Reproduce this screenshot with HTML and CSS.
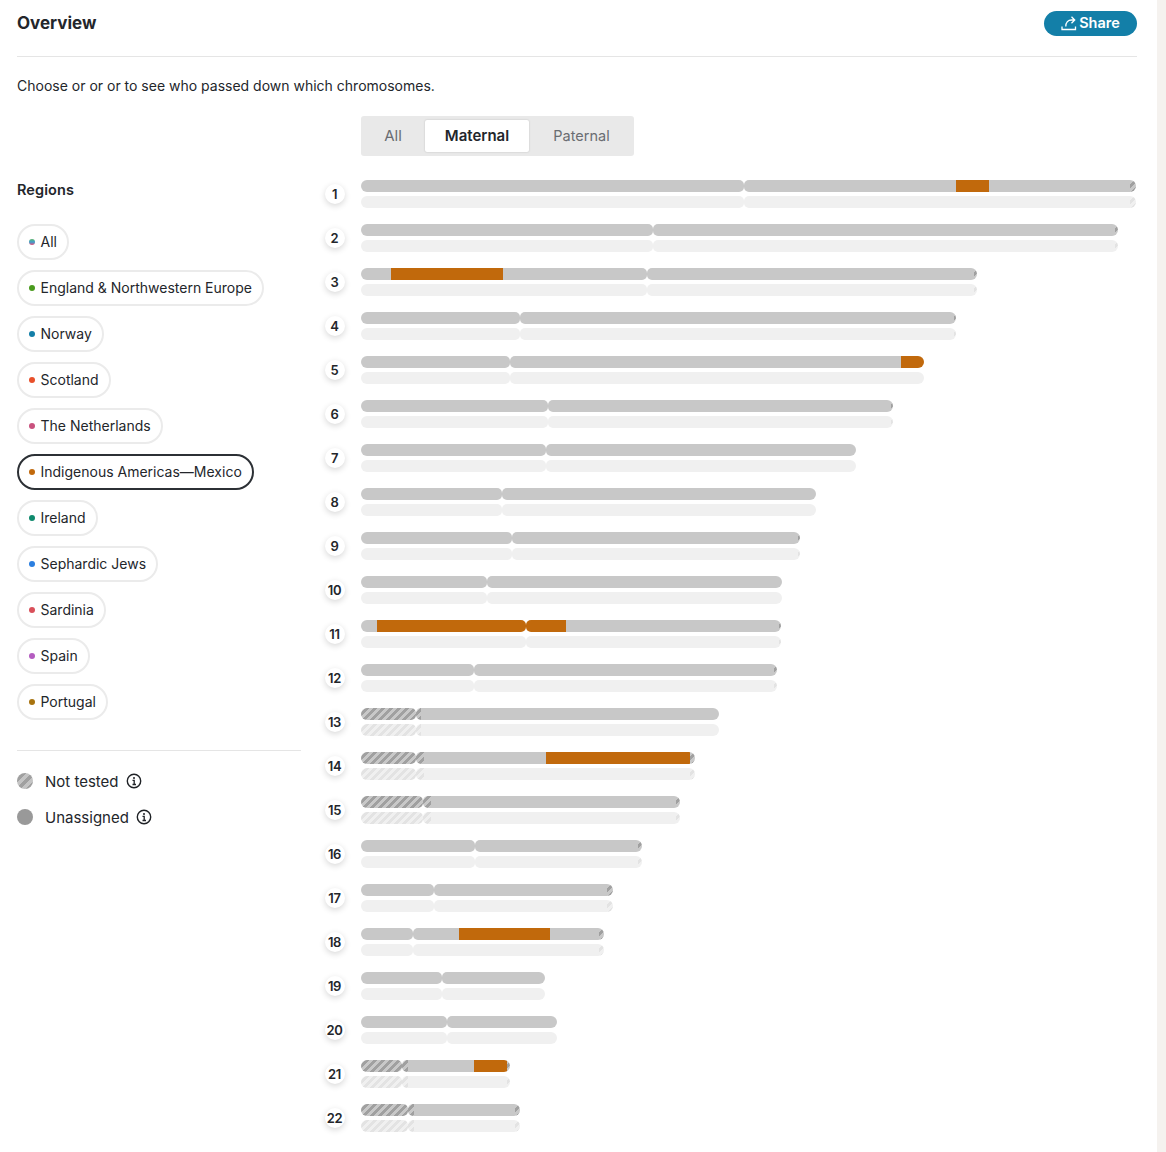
FILE: index.html
```html
<!DOCTYPE html>
<html lang="en">
<head>
<meta charset="utf-8">
<title>Overview</title>
<link rel="stylesheet" href="styles.css">
</head>
<body>
<div class="page">
<main class="panel">
<header class="head">
<h1 class="title">Overview</h1>
<button class="share"><svg class="share-icon" viewBox="0 0 16 16" width="16" height="16"><path d="M1 11.500v3h13.500v-3M4.800 11.500c0-4 2.300-6.500 5.700-6.500h3M10.500 1.800l3.200 3.200-3.200 3.200" fill="none" stroke="#fff" stroke-width="1.300"/></svg>Share</button>
</header>
<p class="intro">Choose or or or to see who passed down which chromosomes.</p>
<div class="tabs-row"><div class="tabs"><span class="tab tab-all">All</span><span class="tab active">Maternal</span><span class="tab tab-pat">Paternal</span></div></div>
<div class="columns">
<aside class="side">
<h2 class="regions">Regions</h2>
<ul class="pills">
<li class="pill"><i class="dot dot-all"></i>All</li>
<li class="pill"><i class="dot d-green"></i>England &amp; Northwestern Europe</li>
<li class="pill"><i class="dot d-teal"></i>Norway</li>
<li class="pill"><i class="dot d-red"></i>Scotland</li>
<li class="pill"><i class="dot d-pink"></i>The Netherlands</li>
<li class="pill selected"><i class="dot d-orange"></i>Indigenous Americas—Mexico</li>
<li class="pill"><i class="dot d-emerald"></i>Ireland</li>
<li class="pill"><i class="dot d-blue"></i>Sephardic Jews</li>
<li class="pill"><i class="dot d-coral"></i>Sardinia</li>
<li class="pill"><i class="dot d-purple"></i>Spain</li>
<li class="pill"><i class="dot d-brown"></i>Portugal</li>
</ul>
<div class="legend">
<div class="legend-row"><i class="swatch swatch-hatch"></i>Not tested<svg class="info" viewBox="0 0 16 16" width="16" height="16"><circle cx="8" cy="8" r="6.700" fill="none" stroke="#1f2226" stroke-width="1.400"/><path d="M6.500 7.300H8.200V11.500M6.500 11.500H10" fill="none" stroke="#1f2226" stroke-width="1.300"/><circle cx="8" cy="4.900" r="1" fill="#1f2226"/></svg></div>
<div class="legend-row"><i class="swatch swatch-solid"></i>Unassigned<svg class="info" viewBox="0 0 16 16" width="16" height="16"><circle cx="8" cy="8" r="6.700" fill="none" stroke="#1f2226" stroke-width="1.400"/><path d="M6.500 7.300H8.200V11.500M6.500 11.500H10" fill="none" stroke="#1f2226" stroke-width="1.300"/><circle cx="8" cy="4.900" r="1" fill="#1f2226"/></svg></div>
</div>
</aside>
<section class="chart">
<div class="row"><span class="num">1</span><div class="tracks">
<div class="track top"><div class="arm p"><span class="seg plain" style="width:383px"></span></div><div class="arm q"><span class="seg plain" style="width:212px"></span><span class="seg orange" style="width:33px"></span><span class="seg plain" style="width:141px"></span><span class="seg hatch" style="width:6px"></span></div></div>
<div class="track bottom"><div class="arm p"><span class="seg plain" style="width:383px"></span></div><div class="arm q"><span class="seg plain" style="width:386px"></span><span class="seg hatch" style="width:6px"></span></div></div>
</div></div>
<div class="row"><span class="num">2</span><div class="tracks">
<div class="track top"><div class="arm p"><span class="seg plain" style="width:292px"></span></div><div class="arm q"><span class="seg plain" style="width:462px"></span><span class="seg hatch" style="width:3px"></span></div></div>
<div class="track bottom"><div class="arm p"><span class="seg plain" style="width:292px"></span></div><div class="arm q"><span class="seg plain" style="width:462px"></span><span class="seg hatch" style="width:3px"></span></div></div>
</div></div>
<div class="row"><span class="num">3</span><div class="tracks">
<div class="track top"><div class="arm p"><span class="seg plain" style="width:30px"></span><span class="seg orange" style="width:112px"></span><span class="seg plain" style="width:144px"></span></div><div class="arm q"><span class="seg plain" style="width:327px"></span><span class="seg hatch" style="width:3px"></span></div></div>
<div class="track bottom"><div class="arm p"><span class="seg plain" style="width:286px"></span></div><div class="arm q"><span class="seg plain" style="width:327px"></span><span class="seg hatch" style="width:3px"></span></div></div>
</div></div>
<div class="row"><span class="num">4</span><div class="tracks">
<div class="track top"><div class="arm p"><span class="seg plain" style="width:159px"></span></div><div class="arm q"><span class="seg plain" style="width:434px"></span><span class="seg hatch" style="width:2px"></span></div></div>
<div class="track bottom"><div class="arm p"><span class="seg plain" style="width:159px"></span></div><div class="arm q"><span class="seg plain" style="width:434px"></span><span class="seg hatch" style="width:2px"></span></div></div>
</div></div>
<div class="row"><span class="num">5</span><div class="tracks">
<div class="track top"><div class="arm p"><span class="seg plain" style="width:149px"></span></div><div class="arm q"><span class="seg plain" style="width:391px"></span><span class="seg orange" style="width:23px"></span></div></div>
<div class="track bottom"><div class="arm p"><span class="seg plain" style="width:149px"></span></div><div class="arm q"><span class="seg plain" style="width:414px"></span></div></div>
</div></div>
<div class="row"><span class="num">6</span><div class="tracks">
<div class="track top"><div class="arm p"><span class="seg plain" style="width:187px"></span></div><div class="arm q"><span class="seg plain" style="width:343px"></span><span class="seg hatch" style="width:2px"></span></div></div>
<div class="track bottom"><div class="arm p"><span class="seg plain" style="width:187px"></span></div><div class="arm q"><span class="seg plain" style="width:343px"></span><span class="seg hatch" style="width:2px"></span></div></div>
</div></div>
<div class="row"><span class="num">7</span><div class="tracks">
<div class="track top"><div class="arm p"><span class="seg plain" style="width:185px"></span></div><div class="arm q"><span class="seg plain" style="width:310px"></span></div></div>
<div class="track bottom"><div class="arm p"><span class="seg plain" style="width:185px"></span></div><div class="arm q"><span class="seg plain" style="width:310px"></span></div></div>
</div></div>
<div class="row"><span class="num">8</span><div class="tracks">
<div class="track top"><div class="arm p"><span class="seg plain" style="width:141px"></span></div><div class="arm q"><span class="seg plain" style="width:314px"></span></div></div>
<div class="track bottom"><div class="arm p"><span class="seg plain" style="width:141px"></span></div><div class="arm q"><span class="seg plain" style="width:314px"></span></div></div>
</div></div>
<div class="row"><span class="num">9</span><div class="tracks">
<div class="track top"><div class="arm p"><span class="seg plain" style="width:151px"></span></div><div class="arm q"><span class="seg plain" style="width:286px"></span><span class="seg hatch" style="width:2px"></span></div></div>
<div class="track bottom"><div class="arm p"><span class="seg plain" style="width:151px"></span></div><div class="arm q"><span class="seg plain" style="width:286px"></span><span class="seg hatch" style="width:2px"></span></div></div>
</div></div>
<div class="row"><span class="num">10</span><div class="tracks">
<div class="track top"><div class="arm p"><span class="seg plain" style="width:126px"></span></div><div class="arm q"><span class="seg plain" style="width:295px"></span></div></div>
<div class="track bottom"><div class="arm p"><span class="seg plain" style="width:126px"></span></div><div class="arm q"><span class="seg plain" style="width:295px"></span></div></div>
</div></div>
<div class="row"><span class="num">11</span><div class="tracks">
<div class="track top"><div class="arm p"><span class="seg plain" style="width:16px"></span><span class="seg orange" style="width:149px"></span></div><div class="arm q"><span class="seg orange" style="width:40px"></span><span class="seg plain" style="width:213px"></span><span class="seg hatch" style="width:2px"></span></div></div>
<div class="track bottom"><div class="arm p"><span class="seg plain" style="width:165px"></span></div><div class="arm q"><span class="seg plain" style="width:253px"></span><span class="seg hatch" style="width:2px"></span></div></div>
</div></div>
<div class="row"><span class="num">12</span><div class="tracks">
<div class="track top"><div class="arm p"><span class="seg plain" style="width:113px"></span></div><div class="arm q"><span class="seg plain" style="width:300px"></span><span class="seg hatch" style="width:3px"></span></div></div>
<div class="track bottom"><div class="arm p"><span class="seg plain" style="width:113px"></span></div><div class="arm q"><span class="seg plain" style="width:300px"></span><span class="seg hatch" style="width:3px"></span></div></div>
</div></div>
<div class="row"><span class="num">13</span><div class="tracks">
<div class="track top"><div class="arm p"><span class="seg hatch" style="width:55px"></span></div><div class="arm q"><span class="seg hatch" style="width:5px"></span><span class="seg plain" style="width:298px"></span></div></div>
<div class="track bottom"><div class="arm p"><span class="seg hatch" style="width:55px"></span></div><div class="arm q"><span class="seg hatch" style="width:5px"></span><span class="seg plain" style="width:298px"></span></div></div>
</div></div>
<div class="row"><span class="num">14</span><div class="tracks">
<div class="track top"><div class="arm p"><span class="seg hatch" style="width:55px"></span></div><div class="arm q"><span class="seg hatch" style="width:8px"></span><span class="seg plain" style="width:122px"></span><span class="seg orange" style="width:144px"></span><span class="seg hatch" style="width:5px"></span></div></div>
<div class="track bottom"><div class="arm p"><span class="seg hatch" style="width:55px"></span></div><div class="arm q"><span class="seg hatch" style="width:8px"></span><span class="seg plain" style="width:266px"></span><span class="seg hatch" style="width:5px"></span></div></div>
</div></div>
<div class="row"><span class="num">15</span><div class="tracks">
<div class="track top"><div class="arm p"><span class="seg hatch" style="width:62px"></span></div><div class="arm q"><span class="seg hatch" style="width:8px"></span><span class="seg plain" style="width:245px"></span><span class="seg hatch" style="width:4px"></span></div></div>
<div class="track bottom"><div class="arm p"><span class="seg hatch" style="width:62px"></span></div><div class="arm q"><span class="seg hatch" style="width:8px"></span><span class="seg plain" style="width:245px"></span><span class="seg hatch" style="width:4px"></span></div></div>
</div></div>
<div class="row"><span class="num">16</span><div class="tracks">
<div class="track top"><div class="arm p"><span class="seg plain" style="width:114px"></span></div><div class="arm q"><span class="seg plain" style="width:163px"></span><span class="seg hatch" style="width:4px"></span></div></div>
<div class="track bottom"><div class="arm p"><span class="seg plain" style="width:114px"></span></div><div class="arm q"><span class="seg plain" style="width:163px"></span><span class="seg hatch" style="width:4px"></span></div></div>
</div></div>
<div class="row"><span class="num">17</span><div class="tracks">
<div class="track top"><div class="arm p"><span class="seg plain" style="width:73px"></span></div><div class="arm q"><span class="seg plain" style="width:173px"></span><span class="seg hatch" style="width:6px"></span></div></div>
<div class="track bottom"><div class="arm p"><span class="seg plain" style="width:73px"></span></div><div class="arm q"><span class="seg plain" style="width:173px"></span><span class="seg hatch" style="width:6px"></span></div></div>
</div></div>
<div class="row"><span class="num">18</span><div class="tracks">
<div class="track top"><div class="arm p"><span class="seg plain" style="width:52px"></span></div><div class="arm q"><span class="seg plain" style="width:46px"></span><span class="seg orange" style="width:91px"></span><span class="seg plain" style="width:49px"></span><span class="seg hatch" style="width:5px"></span></div></div>
<div class="track bottom"><div class="arm p"><span class="seg plain" style="width:52px"></span></div><div class="arm q"><span class="seg plain" style="width:186px"></span><span class="seg hatch" style="width:5px"></span></div></div>
</div></div>
<div class="row"><span class="num">19</span><div class="tracks">
<div class="track top"><div class="arm p"><span class="seg plain" style="width:81px"></span></div><div class="arm q"><span class="seg plain" style="width:103px"></span></div></div>
<div class="track bottom"><div class="arm p"><span class="seg plain" style="width:81px"></span></div><div class="arm q"><span class="seg plain" style="width:103px"></span></div></div>
</div></div>
<div class="row"><span class="num">20</span><div class="tracks">
<div class="track top"><div class="arm p"><span class="seg plain" style="width:86px"></span></div><div class="arm q"><span class="seg plain" style="width:110px"></span></div></div>
<div class="track bottom"><div class="arm p"><span class="seg plain" style="width:86px"></span></div><div class="arm q"><span class="seg plain" style="width:110px"></span></div></div>
</div></div>
<div class="row"><span class="num">21</span><div class="tracks">
<div class="track top"><div class="arm p"><span class="seg hatch" style="width:41px"></span></div><div class="arm q"><span class="seg hatch" style="width:6px"></span><span class="seg plain" style="width:66px"></span><span class="seg orange" style="width:33px"></span><span class="seg hatch" style="width:3px"></span></div></div>
<div class="track bottom"><div class="arm p"><span class="seg hatch" style="width:41px"></span></div><div class="arm q"><span class="seg hatch" style="width:6px"></span><span class="seg plain" style="width:99px"></span><span class="seg hatch" style="width:3px"></span></div></div>
</div></div>
<div class="row"><span class="num">22</span><div class="tracks">
<div class="track top"><div class="arm p"><span class="seg hatch" style="width:47px"></span></div><div class="arm q"><span class="seg hatch" style="width:6px"></span><span class="seg plain" style="width:101px"></span><span class="seg hatch" style="width:5px"></span></div></div>
<div class="track bottom"><div class="arm p"><span class="seg hatch" style="width:47px"></span></div><div class="arm q"><span class="seg hatch" style="width:6px"></span><span class="seg plain" style="width:101px"></span><span class="seg hatch" style="width:5px"></span></div></div>
</div></div>
</section>
</div>
</main>
<div class="strip"></div>
</div>
</body>
</html>
```
FILE: styles.css
```css
* { box-sizing: border-box; }
html, body { margin: 0; padding: 0; }
body { font-family: Inter, "Liberation Sans", sans-serif; color: #23262b; background: #fff; }
.page { display: flex; width: 1166px; height: 1152px; overflow: hidden; }
.panel { width: 1157px; flex: none; padding: 0 20px 0 17px; background: #fff; }
.strip { flex: 1; background: #f5f2ef; }
.head { display: flex; justify-content: space-between; align-items: center; height: 57px; padding-bottom: 10px; border-bottom: 1px solid #e5e5e5; }
.title { margin: 0; font-size: 17px; font-weight: 700; line-height: 24px; }
.share { display: flex; align-items: center; justify-content: center; gap: 2px; width: 93px; height: 25px; padding: 0; border: 0; border-radius: 13px; background: #137fa8; color: #fff; font: 600 14.500px/20px Inter, "Liberation Sans", sans-serif; }
.share-icon { flex: none; }
.intro { margin: 19px 0 0; font-size: 14px; line-height: 20px; }
.tabs-row { margin: 20px 0 0 344px; }
.tabs { display: inline-flex; height: 40px; padding: 4px 0; border-radius: 3px; background: #e9e9e9; }
.tab { display: flex; align-items: center; justify-content: center; padding-bottom: 1px; font-size: 15px; color: #6a6d72; flex: none; }
.tab-all { width: 64px; }
.tab-pat { width: 105px; font-size: 14.500px; }
.tab.active { width: 104px; background: #fff; color: #23262b; font-weight: 600; border-radius: 2px; box-shadow: 0 0 2px rgba(0,0,0,.2); }
.columns { display: flex; margin-top: 24px; }
.side { width: 300px; flex: none; padding-right: 16px; }
.regions { margin: 0; font-size: 14.500px; font-weight: 600; line-height: 20px; letter-spacing: 0.1px; }
.pills { list-style: none; margin: 24px 0 0; padding: 0; display: flex; flex-direction: column; align-items: flex-start; gap: 10px; }
.pill { display: flex; align-items: center; height: 36px; padding: 0 10px 1px; border: 2px solid #ebebeb; border-radius: 18px; font-size: 14px; background: #fff; }
.pill.selected { border-color: #2c3035; }
.dot { width: 6px; height: 6px; border-radius: 50%; margin-right: 5.500px; flex: none; }
.dot-all { background: linear-gradient(#5fb36b, #3f9fd0 50%, #e0507a); }
.d-green { background: #4a9b1e; }
.d-teal { background: #137fa8; }
.d-red { background: #e8502a; }
.d-pink { background: #c9527e; }
.d-orange { background: #c1690c; }
.d-emerald { background: #0f8a6d; }
.d-blue { background: #2b7fe0; }
.d-coral { background: #d9505a; }
.d-purple { background: #b45cc0; }
.d-brown { background: #a8730f; }
.legend { margin-top: 30px; padding-top: 18px; border-top: 1px solid #e5e5e5; display: flex; flex-direction: column; gap: 12px; }
.legend-row { display: flex; align-items: center; height: 24px; font-size: 15px; }
.swatch { width: 16px; height: 16px; border-radius: 50%; margin-right: 12px; flex: none; }
.swatch-hatch { background: repeating-linear-gradient(135deg, #c4c4c4 0 3.500px, #a0a0a0 3.500px 7px); }
.swatch-solid { background: #999; }
.info { margin-left: 7px; flex: none; }
.chart { display: flex; flex-direction: column; gap: 16px; }
.row { display: flex; align-items: center; height: 28px; }
.num { width: 20px; height: 20px; margin: 0 16px 0 8px; padding: 0 1px 1px 0; border-radius: 50%; background: #fff; box-shadow: 0 2px 6px rgba(0,0,0,.16); display: flex; align-items: center; justify-content: center; font-size: 13px; font-weight: 600; flex: none; letter-spacing: -0.3px; }
.tracks { display: flex; flex-direction: column; gap: 4px; }
.track { display: flex; height: 12px; }
.arm { display: flex; height: 12px; overflow: hidden; }
.arm.p { border-radius: 6px 5px 5px 6px; }
.arm.q { border-radius: 5px 6px 6px 5px; }
.seg { display: block; height: 12px; flex: none; }
.top .plain { background: #c8c8c8; }
.bottom .plain { background: #f0f0f0; }
.orange { background: #c1690c; }
.top .hatch { background: repeating-linear-gradient(135deg, #c8c8c8 0 3.300px, #a0a0a0 3.300px 5.660px); }
.bottom .hatch { background: repeating-linear-gradient(135deg, #f0f0f0 0 3.300px, #e3e3e3 3.300px 5.660px); }
```
